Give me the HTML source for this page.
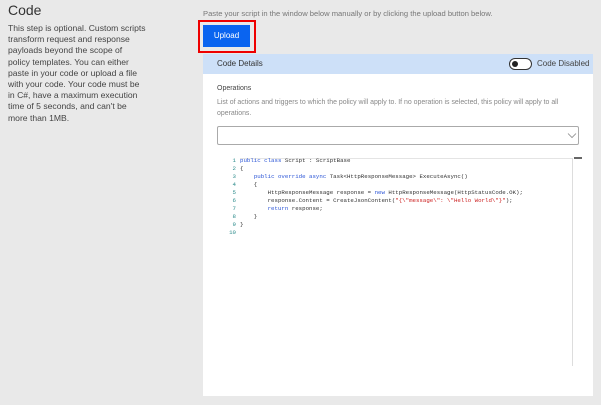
<!DOCTYPE html>
<html><head><meta charset="utf-8"><style>
*{margin:0;padding:0;box-sizing:border-box}
body{width:601px;height:405px;background:#e9e9e9;font-family:"Liberation Sans",sans-serif;position:relative;overflow:hidden;color:#323130}
.abs{position:absolute}
h1{position:absolute;left:8px;top:2px;font-size:14px;font-weight:normal;color:#333}
.desc{left:8px;top:23px;width:160px;font-size:8.6px;line-height:11.2px;color:#444;white-space:nowrap}
.paste{left:203px;top:9px;font-size:7.6px;color:#777}
.red{left:198px;top:20px;width:58px;height:33px;border:2.5px solid #e00}
.btn{left:203px;top:25px;width:47px;height:22px;background:#0a64f0;color:#fff;font-size:8px;text-align:center;line-height:22px}
.panel{left:203px;top:54px;width:390px;height:342px;background:#fff}
.hdr{left:0;top:0;width:390px;height:20px;background:#cde0f8;font-size:8px;line-height:20px;padding-left:14px;color:#333}
.tog{left:306px;top:4px;width:23px;height:12px;border:1px solid #333;border-radius:6px;background:#fff}
.tog:after{content:"";position:absolute;left:2px;top:2px;width:6px;height:6px;border-radius:50%;background:#222}
.togl{left:334px;top:0;font-size:8px;line-height:20px;color:#444}
.ops{left:14px;top:31px;font-size:7px;color:#444}
.opsd{left:14px;top:43px;width:374px;font-size:6.95px;line-height:11px;color:#888}
.sel{left:14px;top:72px;width:362px;height:19px;border:1px solid #aaa;border-radius:2px}
.code{left:23px;top:103px;font-family:"Liberation Mono",monospace;font-size:5.75px;line-height:7.95px;white-space:pre;color:#333}
.ln{color:#2a8a8a;display:inline-block;width:10px;text-align:right;margin-right:4px}
.k{color:#2b55d6}.s{color:#c22}
.vline{left:369px;top:104px;width:1px;height:208px;background:#ddd}
.hline{left:37px;top:104px;width:332px;height:1px;background:#e4e4e4}
.mark{left:371px;top:103px;width:8px;height:2px;background:#666}
</style></head><body>
<h1>Code</h1>
<div class="abs desc">This step is optional. Custom scripts<br>transform request and response<br>payloads beyond the scope of<br>policy templates. You can either<br>paste in your code or upload a file<br>with your code. Your code must be<br>in C#, have a maximum execution<br>time of 5 seconds, and can't be<br>more than 1MB.</div>
<div class="abs paste">Paste your script in the window below manually or by clicking the upload button below.</div>
<div class="abs red"></div>
<div class="abs btn">Upload</div>
<div class="abs panel">
 <div class="abs hdr">Code Details</div>
 <div class="abs tog"></div>
 <div class="abs togl">Code Disabled</div>
 <div class="abs ops">Operations</div>
 <div class="abs opsd">List of actions and triggers to which the policy will apply to. If no operation is selected, this policy will apply to all operations.</div>
 <div class="abs sel"><svg class="abs" style="left:349px;top:5px" width="10" height="7"><path d="M1 1.5l4 4 4-4" fill="none" stroke="#888" stroke-width="0.8"/></svg></div>
 <div class="abs hline"></div>
 <div class="abs vline"></div>
 <div class="abs mark"></div>
 <div class="abs code"><span class="ln">1</span><span class="k">public class</span> Script : ScriptBase
<span class="ln">2</span>{
<span class="ln">3</span>    <span class="k">public override async</span> Task&lt;HttpResponseMessage&gt; ExecuteAsync()
<span class="ln">4</span>    {
<span class="ln">5</span>        HttpResponseMessage response = <span class="k">new</span> HttpResponseMessage(HttpStatusCode.OK);
<span class="ln">6</span>        response.Content = CreateJsonContent(<span class="s">"{\"message\": \"Hello World\"}"</span>);
<span class="ln">7</span>        <span class="k">return</span> response;
<span class="ln">8</span>    }
<span class="ln">9</span>}
<span class="ln">10</span></div>
</div>
</body></html>
